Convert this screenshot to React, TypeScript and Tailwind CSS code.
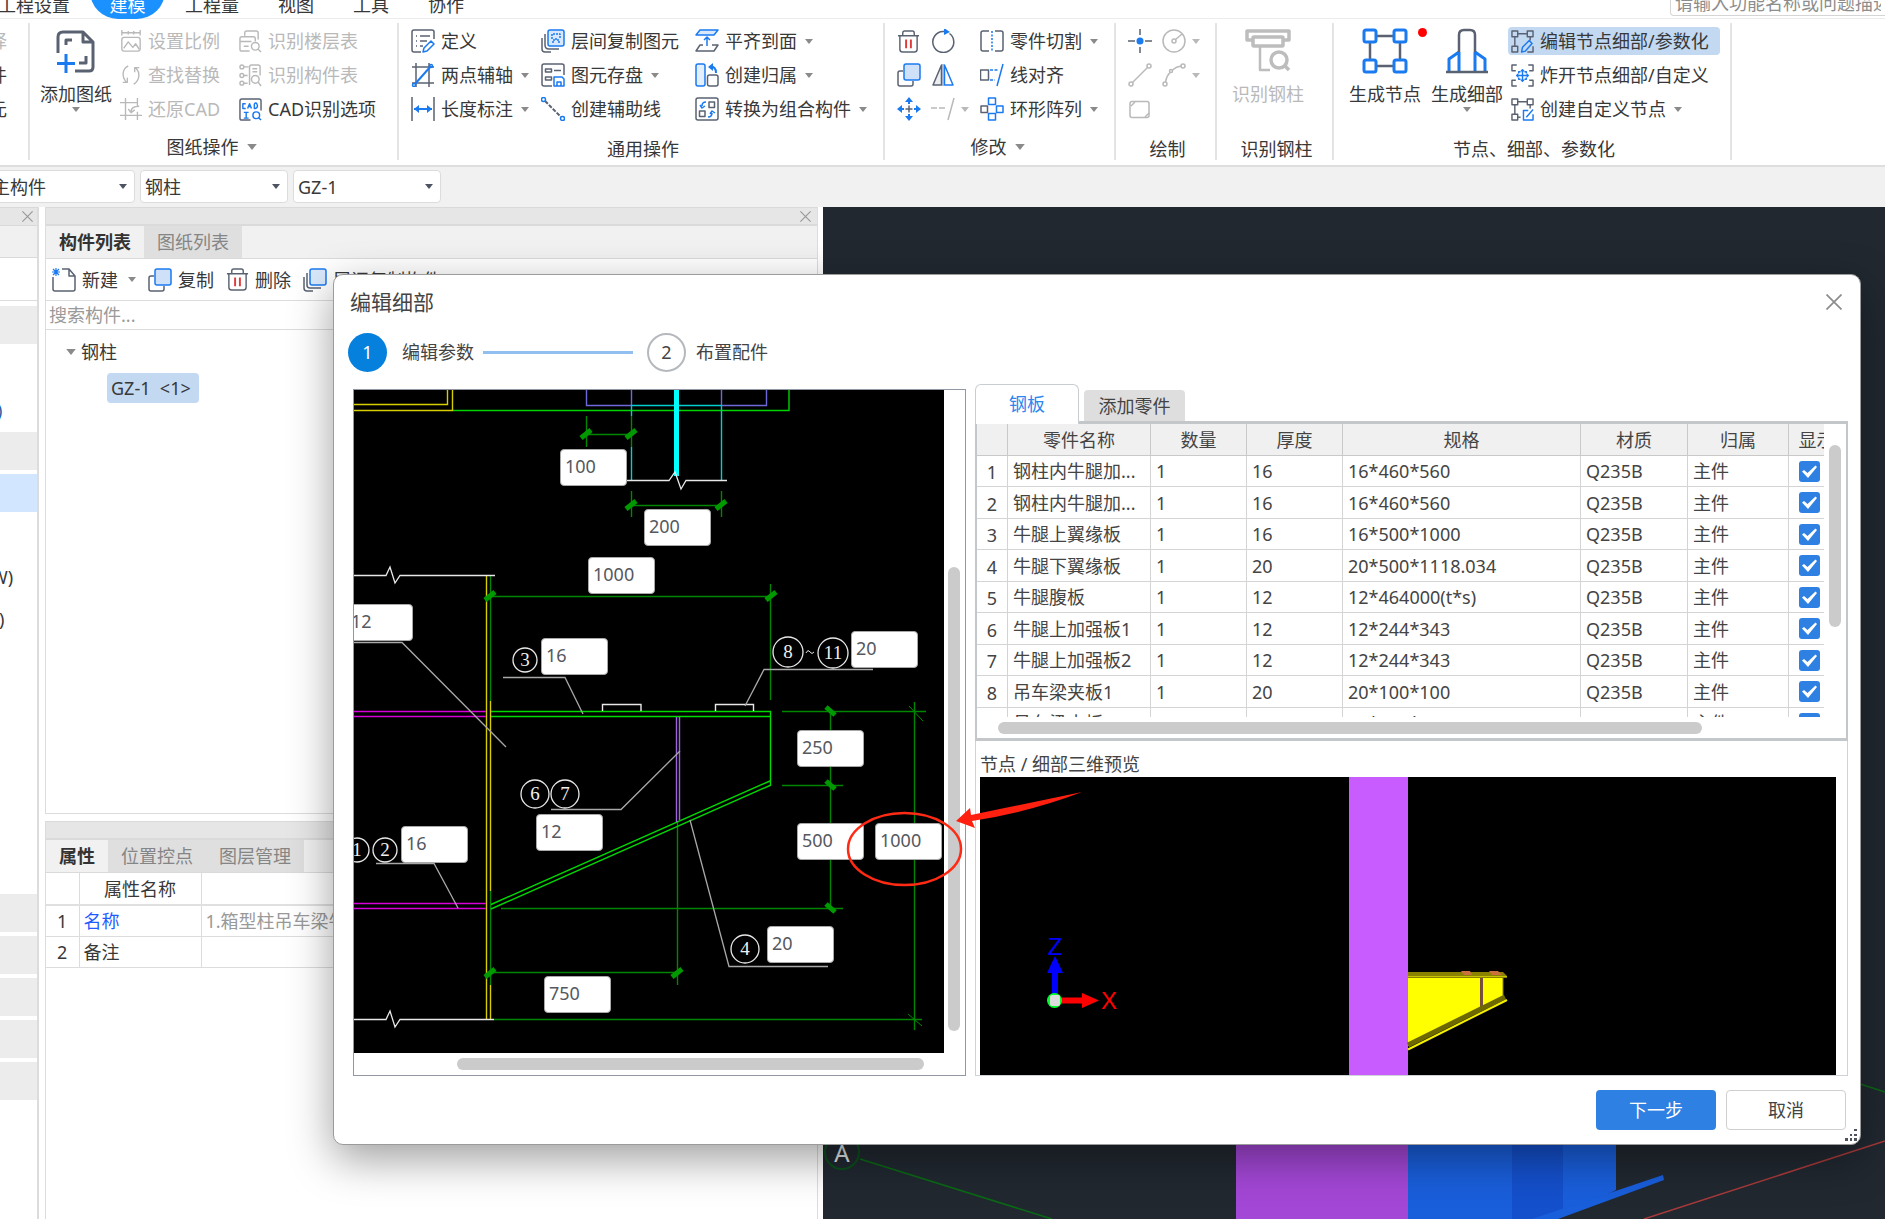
import React, { ReactNode } from "react";

const D = "#5a6272";
const B = "#1a7af0";
const G = "#b9b9b9";

function Ic({ s = 24, box = 24, c = D, w = 1.5, children }: { s?: number; box?: number; c?: string; w?: number; children: ReactNode }) {
  return (
    <svg width={s} height={s} viewBox={`0 0 ${box} ${box}`} fill="none" stroke={c} strokeWidth={w} strokeLinejoin="round" className="shrink-0" aria-hidden="true">
      {children}
    </svg>
  );
}

function Caret({ className = "text-[#8a8a8a]", big = false }: { className?: string; big?: boolean }) {
  return (
    <svg width={big ? 10 : 8} height={big ? 6 : 5} viewBox="0 0 8 5" className={`shrink-0 ${className}`} aria-hidden="true">
      <path d="M0 0h8L4 5z" fill="currentColor" />
    </svg>
  );
}

function Cross({ size = 11, className = "" }: { size?: number; className?: string }) {
  return (
    <svg width={size} height={size} viewBox="0 0 16 16" fill="none" stroke="currentColor" strokeWidth="1.7" className={className} aria-hidden="true">
      <path d="M0.5 0.5l15 15M15.5 0.5l-15 15" />
    </svg>
  );
}

/* ---------- ribbon icons ---------- */

const icons = {
  addSheet: (
    <Ic s={44} box={44} w={3}>
      <path d="M4 24V8q0-5 5-5h20l10 10v25q0 4-4 4H21M29 3v10h10" />
      <path d="M12 16v-5h6M32 27v7h-7" />
      <path d="M12 25v19M3 34.500h18" stroke={B} />
    </Ic>
  ),
  scale: (
    <Ic s={22} c={G}>
      <path d="M2 0v6M22 0v6M2 3h20M9 1v4M15 1v4" />
      <rect x="2" y="8" width="20" height="15" rx="2.500" />
      <path d="M4 20l5-7 5 6 3-4 4 6" />
    </Ic>
  ),
  findReplace: (
    <Ic s={22} c={G}>
      <path d="M9 2C3 5 1 13 7 20M3 20h5v-5M15 22c6-4 8-12 2-18M21 4h-5v5" />
    </Ic>
  ),
  restore: (
    <Ic s={22} c={G}>
      <path d="M6 0v19h18M0 5h19v5M0 19h6v5M19 0v5M19 15v9M21 9c-6 0-9 2-9 6M9 12l3 4 4-3" />
    </Ic>
  ),
  floorTable: (
    <Ic s={23} c={G}>
      <path d="M6 6V3q0-2 2-2h10q2 0 2 2v7M11 22H3q-2 0-2-2V9q0-2 2-2h12q2 0 2 2v3M1 12h12M5 17h5" />
      <circle cx="17" cy="17" r="4" />
      <path d="M20 20l3 3" />
    </Ic>
  ),
  partTable: (
    <Ic s={23} c={G}>
      <circle cx="3" cy="3" r="2" /><circle cx="3" cy="12" r="2" /><circle cx="3" cy="20" r="2" />
      <path d="M5 3h5M5 12h4M5 20h4M11 22V3q0-2 2-2h7q2 0 2 2v9M14 5h5M14 8h5" />
      <circle cx="17" cy="16" r="4" />
      <path d="M20 19l3 4" />
    </Ic>
  ),
  cadOptions: (
    <Ic s={23}>
      <path d="M12 23H3q-2 0-2-2V3q0-2 2-2h18q2 0 2 2v10" />
      <path d="M7 6H4v5h3M9 11l2-5 2 5M10 9h2M16 6v5h1q3-1 2-4t-3-1M5 15h5M7.500 15v6M5 21h5" stroke={B} />
      <circle cx="18" cy="18" r="3.500" stroke={B} />
      <path d="M20.500 20.500L23 23" stroke={B} />
    </Ic>
  ),
  define: (
    <Ic>
      <path d="M23 10V3q0-2-2-2H3Q1 1 1 3v18q0 2 2 2h7M5 7h1M9 7h10M5 12h1M9 12h7M5 17h1M9 17h3" />
      <path d="M12 23l1-4 7-7 3 3-7 7z" stroke={B} />
    </Ic>
  ),
  twoPoint: (
    <Ic>
      <path d="M5 0v24M18 0v24M1 4h22M1 20h22" />
      <path d="M4 21L20 3" stroke={B} strokeWidth="2" />
      <circle cx="20" cy="3" r="1.500" stroke={B} /><circle cx="3" cy="22" r="1.500" stroke={B} />
    </Ic>
  ),
  length: (
    <Ic>
      <path d="M1 0v24M23 0v24" />
      <path d="M3 12h18" stroke={B} strokeWidth="2" />
      <path d="M8 8l-5 4 5 4zM16 8l5 4-5 4z" fill={B} stroke="none" />
    </Ic>
  ),
  floorCopy: (
    <Ic>
      <path d="M4 5v11q0 4 4 4h10M1 9v11q0 3 3 3h6" />
      <rect x="7" y="1" width="16" height="16" rx="2" stroke={B} fill="#d9e9fb" />
      <path d="M11 10V5h8v5M11 13h2v-3h4v3h2" stroke={B} strokeDasharray="2 1" />
    </Ic>
  ),
  save: (
    <Ic>
      <path d="M11 23H3q-2 0-2-2V3q0-2 2-2h18q2 0 2 2v9" />
      <rect x="4.500" y="6" width="6" height="3" /><path d="M13 7.500h7" /><rect x="4.500" y="14" width="6" height="3" />
      <path d="M13 14h8l2 2v7H13zM16 23v-4h4v4" stroke={B} />
    </Ic>
  ),
  auxLine: (
    <Ic>
      <path d="M4 4l16 16" strokeDasharray="4 1.500" strokeWidth="2" />
      <circle cx="2.500" cy="2.500" r="2" stroke={B} /><circle cx="21.500" cy="21.500" r="2" stroke={B} />
    </Ic>
  ),
  alignFace: (
    <Ic>
      <path d="M5 1h18l-4 5H1z" stroke={B} fill="#d9e9fb" />
      <path d="M12 17V8M9 11l3-3 3 3" stroke={B} />
      <path d="M8 16H5l-4 6h18l4-6h-6" />
    </Ic>
  ),
  attribution: (
    <Ic>
      <rect x="1" y="1" width="9" height="22" rx="2" stroke={B} fill="#e3effc" />
      <rect x="12.500" y="12" width="10.500" height="11" rx="2" />
      <path d="M15 4q6-1 6 6" stroke={B} strokeWidth="2" /><path d="M18 0l-5 4 5 4z" fill={B} stroke="none" />
    </Ic>
  ),
  convert: (
    <Ic>
      <rect x="1" y="1" width="22" height="22" rx="2" />
      <rect x="14" y="5" width="5.500" height="5.500" /><rect x="4.500" y="14" width="5.500" height="5.500" />
      <path d="M11 5q-4 0-4 4M5 8l2 3 3-2M13 20q4 0 4-4M15 17l2-3 3 2" stroke={B} />
    </Ic>
  ),
  trash: (
    <Ic s={23}>
      <path d="M1 6h22M6 6V3q0-2 2-2h8q2 0 2 2v3M3 6v14q0 3 3 3h12q3 0 3-3V6" />
      <path d="M9.500 10v9M14.500 10v9" stroke="#e03a3a" strokeWidth="2" />
    </Ic>
  ),
  rotate: (
    <Ic>
      <path d="M18.500 4.500A10.500 10.500 0 1 1 12 2.500h2" /><path d="M13 -1l6 4-6 3z" fill={B} stroke="none" />
    </Ic>
  ),
  copy: (
    <Ic>
      <path d="M6 8H3q-2 0-2 2v11q0 2 2 2h11q2 0 2-2v-3" />
      <rect x="7" y="1" width="16" height="16" rx="2" stroke={B} fill="#cfe1f8" />
    </Ic>
  ),
  mirror: (
    <Ic>
      <path d="M10.500 2v20H2z" fill="#eceef1" /><path d="M13.500 2v20H22z" stroke={B} fill="#fff" /><path d="M12 1v22" stroke="#8fa6c4" />
    </Ic>
  ),
  move: (
    <Ic>
      <path d="M12 8.500v7M8.500 12h7" />
      <path d="M12 0l4 5h-3v2h-2V5H8zM12 24l4-5h-3v-2h-2v2H8zM0 12l5-4v3h2v2H5v3zM24 12l-5-4v3h-2v2h2v3z" fill={B} stroke="none" />
    </Ic>
  ),
  extend: (
    <Ic c={G}>
      <path d="M0 11h14" strokeDasharray="6 2" /><path d="M23 1l-6 22" />
    </Ic>
  ),
  cut: (
    <Ic>
      <path d="M9 2H3q-2 0-2 2v16q0 2 2 2h6M15 2h6q2 0 2 2v16q0 2-2 2h-6" />
      <path d="M12 2v20" stroke={B} strokeDasharray="2 1.500" />
    </Ic>
  ),
  lineAlign: (
    <Ic>
      <rect x="0.500" y="7" width="8" height="10" /><path d="M10 7h8M10 17h5" stroke={B} strokeDasharray="3 1.500" /><path d="M23 1l-6 22" stroke={B} />
    </Ic>
  ),
  ring: (
    <Ic>
      <rect x="8.500" y="1" width="7" height="6.500" stroke={B} /><rect x="8.500" y="16.500" width="7" height="6.500" stroke={B} /><rect x="16.500" y="9" width="6.500" height="6.500" stroke={B} /><rect x="1" y="9" width="6.500" height="6.500" />
    </Ic>
  ),
  point: (
    <Ic>
      <path d="M12 0v6M12 18v6M0 12h7M17 12h7" /><circle cx="12" cy="12" r="3.500" fill={B} stroke="none" />
    </Ic>
  ),
  circle: (
    <Ic c={G}>
      <circle cx="12" cy="12" r="11" /><circle cx="12" cy="12" r="2" /><path d="M13.500 10.500L20 5" />
    </Ic>
  ),
  line: (
    <Ic c={G}>
      <circle cx="21" cy="3" r="2" /><circle cx="3" cy="21" r="2" /><path d="M4.500 19.500l15-15" />
    </Ic>
  ),
  arc: (
    <Ic c={G}>
      <circle cx="21" cy="3" r="2" /><circle cx="3" cy="21" r="2" /><circle cx="9" cy="8" r="1.500" /><path d="M3.500 19q1-6 4.500-9.500M10.500 7q4-3.500 8.500-4" />
    </Ic>
  ),
  rect: (
    <Ic c={G}>
      <rect x="2" y="4.500" width="19" height="16" rx="2" /><path d="M3 9l4-4M17 20l4-4" />
    </Ic>
  ),
  steelColumn: (
    <Ic s={46} box={46} c="#bdbdbd" w={3.500}>
      <path d="M8 12H2V3h42v9h-6" /><rect x="8" y="9" width="30" height="9" rx="1" />
      <path d="M15 18v24h10" strokeWidth="2.500" /><circle cx="34" cy="32" r="8" /><path d="M40 38l4 4" />
    </Ic>
  ),
  node: (
    <Ic s={46} box={46} w={3}>
      <path d="M8 8h30v30H8z" strokeWidth="2.500" />
      <g stroke={B} fill="#fff">
        <rect x="2" y="2" width="12" height="12" rx="2" /><rect x="32" y="2" width="12" height="12" rx="2" />
        <rect x="2" y="32" width="12" height="12" rx="2" /><rect x="32" y="32" width="12" height="12" rx="2" />
      </g>
    </Ic>
  ),
  detail: (
    <Ic s={46} box={46} w={3}>
      <path d="M15 24l-10 7v12M31 24l10 7v12M15 24v20M31 24v20" stroke={B} />
      <path d="M15 24V7q0-5 5-5h6q5 0 5 5v17" strokeWidth="2.500" /><path d="M2 44h42" strokeWidth="2.500" />
    </Ic>
  ),
  editNode: (
    <Ic s={23}>
      <path d="M7 4h10M4 7v10M20 7v4" /><rect x="1" y="1" width="6" height="6" /><rect x="17" y="1" width="6" height="6" /><rect x="1" y="17" width="6" height="6" />
      <path d="M11 23l1-5 7-7 3 3-7 8z" stroke={B} /><path d="M17 23h6v-6" />
    </Ic>
  ),
  explode: (
    <Ic s={23}>
      <path d="M6 1H1v6h4M18 1h5v6h-4M6 23H1v-6h4M18 23h5v-6h-4" />
      <path d="M10 8H8v2M14 8h2v2M10 16H8v-2M14 16h2v-2M12 6v12M6 12h12M10.500 7.500L12 6l1.500 1.500M10.500 16.500L12 18l1.500-1.500M7.500 10.500L6 12l1.500 1.500M16.500 10.500L18 12l-1.500 1.500" stroke={B} />
    </Ic>
  ),
  customNode: (
    <Ic s={23}>
      <path d="M7 4h10M4 7v10M20 7v4M7 20h3" /><rect x="1" y="1" width="6" height="6" /><rect x="17" y="1" width="6" height="6" /><rect x="1" y="17" width="6" height="6" />
      <path d="M18 13h-5v10h10v-6M16 20l7-8" stroke={B} />
    </Ic>
  ),
  newFile: (
    <Ic>
      <path d="M1 9v12q0 2 2 2h18q2 0 2-2V8l-6-7h-7M17 1v7h6" />
      <path d="M0 4h8M4 0v8M1 1l6 6M7 1L1 7" stroke={B} strokeWidth="1.200" />
    </Ic>
  ),
  layers: (
    <Ic>
      <path d="M4 5v12q0 3 3 3h11M1 9v11q0 3 3 3h6" />
      <rect x="7" y="1" width="16" height="16" rx="2" stroke={B} fill="#d9e9fb" />
    </Ic>
  ),
};

/* ---------- ribbon ---------- */

function Tool({ icon, label, caret, off, on, className = "" }: { icon: ReactNode; label?: string; caret?: boolean; off?: boolean; on?: boolean; className?: string }) {
  return (
    <button
      type="button"
      disabled={off}
      aria-label={label ? undefined : "工具"}
      className={`flex h-[34px] shrink-0 items-center whitespace-nowrap ${off ? "text-[#b9b9b9]" : "text-[#383838]"} ${className}`}
    >
      <span className={`flex h-7 items-center gap-1.5 rounded ${on ? "-mx-[3px] bg-[#c3d9f2] pl-[3px] pr-[11px]" : ""}`}>
        {icon}
        {label}
      </span>
      {caret && <Caret className={`${label ? "ml-2" : "ml-1.5"} ${off ? "text-[#b9b9b9]" : "text-[#8a8a8a]"}`} />}
    </button>
  );
}

function BigTool({ icon, label, caret, off, dot }: { icon: ReactNode; label: string; caret?: boolean; off?: boolean; dot?: boolean }) {
  return (
    <button type="button" disabled={off} className={`relative flex w-[72px] shrink-0 flex-col items-center pt-1 ${off ? "text-[#b9b9b9]" : "text-[#383838]"}`}>
      <span className="flex h-[46px] items-center">{icon}</span>
      <span className="mt-2 whitespace-nowrap leading-6">{label}</span>
      {caret && <Caret className="mt-px text-[#8a8a8a]" />}
      {dot && <i className="absolute -right-1.5 top-1 size-[9px] rounded-full bg-[#ff0000]" />}
    </button>
  );
}

function Group({ label, more, className, children }: { label: string; more?: boolean; className: string; children: ReactNode }) {
  return (
    <section className={`flex shrink-0 flex-col border-r-2 border-[#e4e4e4] ${className}`}>
      <div className="flex h-[103px] pt-px">{children}</div>
      <h2 className={`mt-3 flex h-[22px] items-center justify-center gap-2 self-stretch ${more ? "pb-1 pr-1" : "pl-1"}`}>
        {label}
        {more && <Caret big />}
      </h2>
    </section>
  );
}

function Col({ className = "", children }: { className?: string; children: ReactNode }) {
  return <div className={`flex shrink-0 flex-col items-start ${className}`}>{children}</div>;
}

function Ribbon() {
  return (
    <header className="shrink-0 overflow-hidden bg-white text-[#383838]">
      <nav className="flex h-[19px] items-end justify-between border-b border-[#ececec]">
        <div className="-mb-px flex h-7 items-center whitespace-nowrap">
          <a href="#settings" className="-ml-0.5">工程设置</a>
          <a href="#model" className="ml-5 flex h-7 w-[75px] items-center justify-center rounded-b-full bg-[#1b90ff] text-white">建模</a>
          <a href="#quantity" className="ml-5">工程量</a>
          <a href="#view" className="ml-[39px]">视图</a>
          <a href="#tools" className="ml-[39px]">工具</a>
          <a href="#team" className="ml-[39px]">协作</a>
        </div>
        <input
          aria-label="搜索功能"
          placeholder="请输入功能名称或问题描述"
          className="mb-0.5 h-[30px] w-[215px] rounded-l border border-r-0 border-[#d5d5d5] px-1 pb-0 pt-1 placeholder:text-[#8d8d8d]"
        />
      </nav>
      <div className="flex h-[148px] border-b-2 border-[#dedede] pb-[5px] pt-1">
        <section className="flex w-[30px] shrink-0 flex-col border-r-2 border-[#e4e4e4] pt-px">
          {["选择", "构件", "图元"].map((t, i) => (
            <div key={t} className={`flex h-[34px] w-[7px] items-center justify-end overflow-hidden whitespace-nowrap ${i === 0 ? "text-[#b9b9b9]" : ""}`}>{t}</div>
          ))}
        </section>
        <Group label="图纸操作" more className="w-[369px]">
          <div className="flex pl-2.5">
            <BigTool icon={icons.addSheet} label="添加图纸" caret />
            <Col className="ml-2 w-[119px]">
              <Tool icon={icons.scale} label="设置比例" off />
              <Tool icon={icons.findReplace} label="查找替换" off />
              <Tool icon={icons.restore} label="还原CAD" off />
            </Col>
            <Col>
              <Tool icon={icons.floorTable} label="识别楼层表" off />
              <Tool icon={icons.partTable} label="识别构件表" off />
              <Tool icon={icons.cadOptions} label="CAD识别选项" />
            </Col>
          </div>
        </Group>
        <Group label="通用操作" className="w-[486px]">
          <div className="flex pl-3">
            <Col className="w-[130px]">
              <Tool icon={icons.define} label="定义" />
              <Tool icon={icons.twoPoint} label="两点辅轴" caret />
              <Tool icon={icons.length} label="长度标注" caret />
            </Col>
            <Col className="w-[154px]">
              <Tool icon={icons.floorCopy} label="层间复制图元" />
              <Tool icon={icons.save} label="图元存盘" caret />
              <Tool icon={icons.auxLine} label="创建辅助线" />
            </Col>
            <Col>
              <Tool icon={icons.alignFace} label="平齐到面" caret />
              <Tool icon={icons.attribution} label="创建归属" caret />
              <Tool icon={icons.convert} label="转换为组合构件" caret />
            </Col>
          </div>
        </Group>
        <Group label="修改" more className="w-[231px]">
          <div className="flex pl-3">
            <Col className="w-[34px]">
              <Tool icon={icons.trash} />
              <Tool icon={icons.copy} />
              <Tool icon={icons.move} />
            </Col>
            <Col className="w-[49px]">
              <Tool icon={icons.rotate} />
              <Tool icon={icons.mirror} />
              <Tool icon={icons.extend} caret off />
            </Col>
            <Col>
              <Tool icon={icons.cut} label="零件切割" caret />
              <Tool icon={icons.lineAlign} label="线对齐" />
              <Tool icon={icons.ring} label="环形阵列" caret />
            </Col>
          </div>
        </Group>
        <Group label="绘制" className="w-[101px]">
          <div className="flex pl-3">
            <Col className="w-[34px]">
              <Tool icon={icons.point} />
              <Tool icon={icons.line} off />
              <Tool icon={icons.rect} off />
            </Col>
            <Col>
              <Tool icon={icons.circle} caret off />
              <Tool icon={icons.arc} caret off />
            </Col>
          </div>
        </Group>
        <Group label="识别钢柱" className="w-[117px]">
          <div className="flex pl-[15px]">
            <BigTool icon={icons.steelColumn} label="识别钢柱" off />
          </div>
        </Group>
        <Group label="节点、细部、参数化" className="w-[398px]">
          <div className="flex pl-[15px]">
            <BigTool icon={icons.node} label="生成节点" dot />
            <span className="w-2.5" />
            <BigTool icon={icons.detail} label="生成细部" caret />
            <Col className="ml-2">
              <Tool icon={icons.editNode} label="编辑节点细部/参数化" on />
              <Tool icon={icons.explode} label="炸开节点细部/自定义" />
              <Tool icon={icons.customNode} label="创建自定义节点" caret />
            </Col>
          </div>
        </Group>
      </div>
    </header>
  );
}

function Combo({ label, value, className }: { label: string; value: string; className: string }) {
  return (
    <div className={`relative shrink-0 ${className}`}>
      <select aria-label={label} className="h-[33px] w-full appearance-none rounded border border-[#dcdcdc] bg-white pl-1 text-[#383838]">
        <option>{value}</option>
      </select>
      <Caret className="pointer-events-none absolute right-2 top-3.5 text-[#4d5361]" />
    </div>
  );
}

/* ---------- docked panels ---------- */

function SideStrip() {
  return (
    <aside className="flex w-[39px] shrink-0 flex-col overflow-hidden border-r-2 border-[#dcdcdc] bg-white text-[#383838]">
      <div className="flex h-[19px] items-center justify-end border-y border-[#d9d9d9] bg-[#e6e6e6] pr-1">
        <button type="button" aria-label="关闭"><Cross className="text-[#999]" /></button>
      </div>
      <div className="h-8 border-b border-[#d9d9d9] bg-[#f0f0f0]" />
      <div className="mt-[42px] h-1.5 border-t border-[#dcdcdc]" />
      <div className="h-[38px] bg-[#ececec]" />
      <div className="flex h-[88px] flex-col justify-end pb-2.5"><span className="-ml-[3px] text-[#2d5fa8]">)</span></div>
      <div className="h-[38px] bg-[#ececec]" />
      <div className="mt-1 h-[38px] bg-[#d3e6ff]" />
      <div className="flex h-[382px] flex-col pt-[52px] leading-[26px]">
        <span className="-ml-[9px]">W)</span>
        <span className="-ml-[1px] mt-4">)</span>
      </div>
      {[0, 1, 2, 3, 4].map((i) => (
        <div key={i} className="mb-1 h-[38px] shrink-0 bg-[#ececec]" />
      ))}
    </aside>
  );
}

function PanelBar({ closable }: { closable?: boolean }) {
  return (
    <div className="flex h-[19px] shrink-0 items-center justify-end border-b-2 border-t border-[#dadada] bg-[#e6e6e6] pr-1.5">
      {closable && <button type="button" aria-label="关闭面板"><Cross className="text-[#999]" /></button>}
    </div>
  );
}

function PanelTabs({ tabs }: { tabs: string[] }) {
  return (
    <div role="tablist" className="flex h-[33px] shrink-0 border-b border-[#dadada] bg-[#f1f1f1]">
      {tabs.map((t, i) => (
        <button key={t} type="button" role="tab" aria-selected={i === 0} className={i === 0 ? "px-[13px] font-bold text-[#333]" : "bg-[#dfdfdf] px-[13px] text-[#858585]"}>
          {t}
        </button>
      ))}
    </div>
  );
}

function SmallTool({ icon, label, caret }: { icon: ReactNode; label: string; caret?: boolean }) {
  return (
    <button type="button" className="flex shrink-0 items-center gap-1.5 whitespace-nowrap">
      {icon}
      {label}
      {caret && <Caret className="ml-1 text-[#8a8a8a]" />}
    </button>
  );
}

function DockPanels() {
  return (
    <div className="ml-1.5 flex w-[773px] shrink-0 flex-col text-[#383838]">
      <section className="flex h-[607px] shrink-0 flex-col border border-[#dcdcdc] border-t-0 bg-white">
        <PanelBar closable />
        <PanelTabs tabs={["构件列表", "图纸列表"]} />
        <div className="flex h-[42px] shrink-0 items-center gap-3 border-b border-[#dcdcdc] pl-1.5">
          <SmallTool icon={icons.newFile} label="新建" caret />
          <SmallTool icon={icons.copy} label="复制" />
          <SmallTool icon={icons.trash} label="删除" />
          <SmallTool icon={icons.layers} label="层间复制构件" />
        </div>
        <input aria-label="搜索构件" placeholder="搜索构件..." className="h-[29px] shrink-0 border-b border-[#dcdcdc] px-[3px] placeholder:text-[#9a9a9a]" />
        <ul className="pt-[7px] leading-[30px]">
          <li>
            <span className="flex items-center gap-[5px] pl-5"><Caret big /> 钢柱</span>
            <ul className="pl-[61px] pt-1.5">
              <li className="inline-block whitespace-pre rounded bg-[#c3d9f2] pl-1 pr-2">{"GZ-1  <1>"}</li>
            </ul>
          </li>
        </ul>
      </section>
      <section className="mt-[7px] flex flex-1 flex-col border-x border-[#dcdcdc] bg-white">
        <PanelBar />
        <PanelTabs tabs={["属性", "位置控点", "图层管理"]} />
        <table className="w-full table-fixed border-collapse">
          <thead>
            <tr className="h-[32px] border-b-2 border-[#e0e0e0]">
              <th className="w-[33px] border-r border-[#dcdcdc]" />
              <th className="w-[122px] border-r border-[#dcdcdc] font-normal">属性名称</th>
              <th className="font-normal" />
            </tr>
          </thead>
          <tbody>
            <tr className="h-[31px] border-b border-[#dcdcdc]">
              <td className="border-r border-[#dcdcdc] text-center">1</td>
              <td className="border-r border-[#dcdcdc] pl-1 text-[#1f5cff]">名称</td>
              <td className="pl-1 text-[#999]">1.箱型柱吊车梁牛腿</td>
            </tr>
            <tr className="h-[31px] border-b border-[#dcdcdc]">
              <td className="border-r border-[#dcdcdc] text-center">2</td>
              <td className="border-r border-[#dcdcdc] pl-1">备注</td>
              <td />
            </tr>
          </tbody>
        </table>
      </section>
    </div>
  );
}

function ModelCanvas() {
  return (
    <div className="relative ml-[5px] min-w-0 flex-1 overflow-hidden bg-[#212830]">
      <svg className="absolute inset-0 h-full w-full" viewBox="823 207 1062 1012" preserveAspectRatio="xMaxYMax slice" role="img" aria-label="三维模型">
        <path d="M860 1159L1052 1219M1848 1080L1885 1092" stroke="#0b6a14" strokeWidth="1.500" fill="none" />
        <path d="M1644 1219L1885 1141" stroke="#a83a3a" strokeWidth="1.500" fill="none" />
        <circle cx="842" cy="1152" r="17" fill="none" stroke="#0b4f1c" strokeWidth="2" />
        <text x="842" y="1162" textAnchor="middle" fontSize="24" fill="#e2e4e6">A</text>
        <rect x="1236" y="1000" width="173" height="219" fill="#a347d6" />
        <rect x="1408" y="1000" width="208" height="219" fill="#195edb" />
        <rect x="1512" y="1000" width="51" height="219" fill="#1450cc" />
        <path d="M1616 1190l-58 29h58z" fill="#212830" />
        <path d="M1532 1219L1663 1175l1 5-106 39z" fill="#195edb" />
      </svg>
    </div>
  );
}

/* ---------- parametric drawing ---------- */

const params: { x: number; y: number; v: string }[] = [
  { x: 560, y: 449, v: "100" },
  { x: 644, y: 509, v: "200" },
  { x: 588, y: 557, v: "1000" },
  { x: 346, y: 604, v: "12" },
  { x: 541, y: 638, v: "16" },
  { x: 851, y: 631, v: "20" },
  { x: 797, y: 730, v: "250" },
  { x: 797, y: 823, v: "500" },
  { x: 875, y: 823, v: "1000" },
  { x: 536, y: 814, v: "12" },
  { x: 401, y: 826, v: "16" },
  { x: 767, y: 926, v: "20" },
  { x: 544, y: 976, v: "750" },
];

const bubbles: { x: number; y: number; r: number; t: string }[] = [
  { x: 525, y: 660, r: 12, t: "3" },
  { x: 788, y: 652, r: 15, t: "8" },
  { x: 833, y: 653, r: 15, t: "11" },
  { x: 535, y: 794, r: 14, t: "6" },
  { x: 565, y: 794, r: 14, t: "7" },
  { x: 357, y: 850, r: 12, t: "1" },
  { x: 385, y: 850, r: 12, t: "2" },
  { x: 745, y: 949, r: 14, t: "4" },
];

const slashTicks = [[586, 434], [631, 434], [631, 505], [721, 505], [490, 596], [771, 596], [490, 973], [677, 973]];
const backTicks = [[831, 711], [831, 785], [831, 908]];

function Drawing() {
  return (
    <div className="relative min-w-0 flex-1 overflow-hidden bg-black">
      <svg className="absolute left-0 top-0" width="590" height="663" viewBox="354 390 590 663" fill="none" role="img" aria-label="牛腿参数图">
        <g strokeWidth="1.400">
          <path d="M354 404.500H447.500V390M354 410.500H452.500V390" stroke="#d6ce00" />
          <path d="M453 410.500H789V390" stroke="#00d400" />
          <path d="M586.500 390V405.500H631.500V390M721.500 390V405.500H766.500V390" stroke="#6d69da" />
          <path d="M631 405.500H721M631.500 405V416M631.500 447V480M721.500 405V480" stroke="#00cfd0" />
          <rect x="674" y="390" width="5" height="86" fill="#00ffff" />
          <path d="M586.500 416V447M631.500 416V447M586 434.500H631M631.500 491V517M721.500 491V517M631 505.500H721M490 596.500H771M770.500 584V700M490.500 576V701M490.500 891V985M782 711.500H926M830.500 711V908M914.500 702V1030M782 785.500H843M501 908.500H843M677.500 822V985M490 972.500H677M494 1019.500H922" stroke="#008600" />
          <path d="M486.500 576V1019M490.500 701V891M490.500 985V1019" stroke="#d6ce00" />
          <path d="M354 711.500H486M354 716.500H486M354 903.500H486M354 908.500H486" stroke="#d800d8" />
          <path d="M491 711.500H771M491 716.500H771M770.500 711V785M491 904.500L771 780.500M491 909L771 785" stroke="#00dc00" />
          <path d="M676.500 717V822M679.500 717V820" stroke="#9a66d8" />
          <path d="M602.500 711V704.500H641V711M715.500 711V704.500H753.500V711" stroke="#e8e8e8" />
        </g>
        <path d="M622 480.500H669L675 472L681 489L686 480.500H727M354 575.500H386L390 567L395 583L400 575.500H495M354 1019.500H386L390 1011L395 1027L400 1019.500H494" stroke="#e8e8e8" strokeWidth="1.300" />
        <path d="M354 642.500H402L506 747M503 677.500H565L583 714M873 669.500H764L745 706M551 809.500H621L680 751M376 863.500H434L458 908M690 820L729 966.500H828" stroke="#a8a8a8" strokeWidth="1.300" />
        <g stroke="#009a00" strokeWidth="5">
          {slashTicks.map(([x, y]) => <path key={`${x}-${y}`} d={`M${x - 5} ${y + 4}L${x + 5} ${y - 4}`} />)}
          {backTicks.map(([x, y]) => <path key={`${x}-${y}`} d={`M${x - 5} ${y - 4}L${x + 4} ${y + 4}`} />)}
        </g>
        <path d="M909 706L923 721M908 1014L922 1026" stroke="#008a00" />
        {bubbles.map((b) => (
          <g key={b.t}>
            <circle cx={b.x} cy={b.y} r={b.r} stroke="#e8e8e8" strokeWidth="1.300" />
            <text x={b.x} y={b.y + 6} textAnchor="middle" fontSize="19" fill="#f0f0f0" style={{ fontFamily: "Liberation Serif, serif" }}>{b.t}</text>
          </g>
        ))}
        <path d="M806 653q2-4 4-1t4 0" stroke="#e8e8e8" />
      </svg>
      {params.map((p) => (
        <input
          key={`${p.x}-${p.y}`}
          aria-label={`参数 ${p.v}`}
          defaultValue={p.v}
          className="absolute h-[37px] w-[67px] rounded border border-[#a8a8a8] bg-white px-1 pb-1 text-[#55585e]"
          style={{ left: p.x - 354, top: p.y - 390 }}
        />
      ))}
    </div>
  );
}

/* ---------- parts table ---------- */

const heads = ["", "零件名称", "数量", "厚度", "规格", "材质", "归属", "显示"];
const rows = [
  ["钢柱内牛腿加...", "16", "16*460*560"],
  ["钢柱内牛腿加...", "16", "16*460*560"],
  ["牛腿上翼缘板", "16", "16*500*1000"],
  ["牛腿下翼缘板", "20", "20*500*1118.034"],
  ["牛腿腹板", "12", "12*464000(t*s)"],
  ["牛腿上加强板1", "12", "12*244*343"],
  ["牛腿上加强板2", "12", "12*244*343"],
  ["吊车梁夹板1", "20", "20*100*100"],
  ["吊车梁夹板2", "20", "20*100*100"],
];

function PartsTable() {
  return (
    <div className="flex h-[320px] shrink-0 flex-col border-x-2 border-y-[3px] border-[#c4c7ca] bg-white">
      <div className="flex h-[293px]">
        <div className="min-w-0 flex-1 overflow-hidden">
          <table className="w-[868px] table-fixed border-separate border-spacing-0 whitespace-nowrap">
            <colgroup>
              <col className="w-[31px]" /><col className="w-[143px]" /><col className="w-[96px]" /><col className="w-[96px]" />
              <col className="w-[238px]" /><col className="w-[107px]" /><col className="w-[101px]" /><col className="w-[56px]" />
            </colgroup>
            <thead>
              <tr className="h-[32px] bg-[#f0f0f0]">
                {heads.map((h) => (
                  <th key={h} scope="col" className="border-b border-r border-[#c9c9c9] p-0 font-normal leading-6">{h}</th>
                ))}
              </tr>
            </thead>
            <tbody>
              {rows.map(([name, thick, spec], i) => (
                <tr key={i} className="odd:h-[31px] even:h-[32px] [&>td]:border-b [&>td]:border-r [&>td]:border-[#d4d4d4] [&>td]:pb-0 [&>td]:leading-6">
                  <td className="px-0 pt-0.5 text-center">{i + 1}</td>
                  <td className="px-[5px] pt-0">{name}</td>
                  <td className="px-[5px] pt-0">1</td>
                  <td className="px-[5px] pt-0">{thick}</td>
                  <td className="px-[5px] pt-0">{spec}</td>
                  <td className="px-[5px] pt-0">Q235B</td>
                  <td className="px-[5px] pt-0">主件</td>
                  <td className="pl-2.5 pr-0 pt-0">
                    <span className="relative block size-[21px]">
                      <input type="checkbox" defaultChecked aria-label={`显示 ${name} ${i + 1}`} className="block size-[21px] appearance-none rounded-[3px] bg-[#2e80e2]" />
                      <svg className="pointer-events-none absolute inset-0" width="21" height="21" viewBox="0 0 21 21" aria-hidden="true">
                        <path d="M3 10.500l2-1.500 3.500 3 8-7.500 1.500 1.500L9 17z" fill="#fff" />
                      </svg>
                    </span>
                  </td>
                </tr>
              ))}
            </tbody>
          </table>
        </div>
        <div className="w-[22px] shrink-0 pl-[5px] pt-[21px]">
          <div className="h-[182px] w-3 rounded-full bg-[#cbcbcb]" />
        </div>
      </div>
      <div className="flex h-[21px] items-center pl-[21px]">
        <div className="h-3 w-[704px] rounded-full bg-[#cbcbcb]" />
      </div>
    </div>
  );
}

function Preview() {
  return (
    <svg className="block h-0 min-h-0 w-full flex-1 bg-black" viewBox="980 777 856 298" preserveAspectRatio="xMidYMid slice" role="img" aria-label="三维预览">
      <rect x="1349" y="700" width="59" height="450" fill="#c95cff" />
      <path d="M1408 976H1503V997L1408 1046Z" fill="#ffff00" />
      <path d="M1408 972H1503L1507 976V978H1408Z" fill="#8a8200" />
      <path d="M1408 976.500H1507" stroke="#c9c400" />
      <path d="M1461 971h9l2 4h-8zM1489 971h9l4 4h-10z" fill="#c9703c" />
      <path d="M1481.500 978V1010" stroke="#77503c" strokeWidth="3" />
      <path d="M1408 1045L1505 997" stroke="#6e6800" strokeWidth="5" />
      <path d="M1408 1049.500L1507 1000" stroke="#f4f000" strokeWidth="2" />
      <path d="M1503 978V996" stroke="#8a8200" />
      <path d="M1055 998V970" stroke="#0000ff" strokeWidth="6" />
      <path d="M1047 973L1055 956L1063 973Z" fill="#0000ff" />
      <path d="M1058 1000.500H1084" stroke="#ff0000" strokeWidth="6" />
      <path d="M1082 993L1099 1000.500L1082 1008Z" fill="#ff0000" />
      <circle cx="1054.500" cy="1000.500" r="7.500" fill="#00ff2a" />
      <rect x="1050" y="995" width="10" height="11" rx="2" fill="#dcdcdc" />
      <text x="1055" y="955" textAnchor="middle" fontSize="24" fill="#0000ff" style={{ fontFamily: "Liberation Sans, sans-serif" }}>Z</text>
      <text x="1109" y="1009" textAnchor="middle" fontSize="24" fill="#ff0000" style={{ fontFamily: "Liberation Sans, sans-serif" }}>X</text>
    </svg>
  );
}

function Dialog() {
  return (
    <div role="dialog" aria-label="编辑细部" className="absolute bottom-[74px] left-[333px] right-6 top-[274px] flex flex-col rounded-[10px] border border-[#9b9b9b] bg-white text-[#444] shadow-[0_14px_44px_rgba(0,0,0,0.38)]">
      <div className="flex h-[54px] shrink-0 items-center justify-between pl-4 pr-[18px]">
        <h1 className="text-[21px]">编辑细部</h1>
        <button type="button" aria-label="关闭"><Cross size={16} className="text-[#8c8c8c]" /></button>
      </div>
      <ol className="mb-[9px] flex h-[46px] shrink-0 items-center pl-3.5">
        <li className="flex items-center">
          <span className="flex size-[39px] items-center justify-center rounded-full bg-[#0680dd] text-white">1</span>
          <span className="ml-[15px]">编辑参数</span>
        </li>
        <li className="flex items-center">
          <span className="ml-[9px] h-[3px] w-[150px] bg-[#91bff0]" />
          <span className="ml-3.5 flex size-[39px] items-center justify-center rounded-full border-2 border-[#b5b9bd]">2</span>
          <span className="ml-2.5">布置配件</span>
        </li>
      </ol>
      <div className="flex min-h-0 flex-1 gap-[9px] pl-[19px] pr-3">
        <div className="mt-[5px] flex w-[613px] shrink-0 flex-col border border-[#9198a4]">
          <div className="flex min-h-0 flex-1">
            <Drawing />
            <div className="w-[21px] shrink-0 pl-1 pt-[177px]">
              <div className="h-[464px] w-3 rounded-full bg-[#cbcbcb]" />
            </div>
          </div>
          <div className="flex h-[22px] shrink-0 items-center pl-[103px]">
            <div className="h-3 w-[467px] rounded-full bg-[#cbcbcb]" />
          </div>
        </div>
        <div className="flex min-w-0 flex-1 flex-col">
          <div role="tablist" className="flex h-[37px] shrink-0 items-end">
            <button type="button" role="tab" aria-selected="true" className="relative -mb-[3px] h-10 w-[104px] rounded-t-md border border-b-0 border-[#c8cdd2] bg-white pb-0.5 text-[#2b86ee]">钢板</button>
            <button type="button" role="tab" aria-selected="false" className="ml-[5px] h-[31px] w-[101px] rounded-t bg-[#dedede]">添加零件</button>
          </div>
          <PartsTable />
          <div className="flex min-h-0 flex-1 flex-col border border-t-0 border-[#cfd3d8] pl-1 pr-[11px]">
            <h3 className="mt-[11px] mb-px shrink-0 leading-6">节点 / 细部三维预览</h3>
            <Preview />
          </div>
        </div>
      </div>
      <div className="flex h-[68px] shrink-0 items-start justify-end gap-2.5 pr-3.5 pt-3.5">
        <button type="button" className="h-10 w-[120px] rounded bg-[#2e80e2] text-white">下一步</button>
        <button type="button" className="h-10 w-[120px] rounded border border-[#cfcfcf] bg-white">取消</button>
      </div>
      <svg className="absolute bottom-[3px] right-[3px]" width="12" height="12" viewBox="0 0 12 12" fill="#4e545e" aria-hidden="true">
        <path d="M9 0h3v2H9zM9 5h3v2H9zM9 9h3v3H9zM5 5h2v2H5zM5 9h2v3H5zM0 9h3v3H0z" />
      </svg>
      <svg className="pointer-events-none absolute left-[511px] top-[510px]" width="245" height="105" viewBox="845 785 245 105" fill="none" aria-hidden="true">
        <ellipse cx="904.500" cy="849" rx="56.500" ry="36" stroke="#ff2a14" strokeWidth="2.500" />
        <path d="M956 821L970 808L971 815Q1020 805 1082 792Q1030 812 972 821L975 828Z" fill="#ff2010" />
      </svg>
    </div>
  );
}

export default function App() {
  return (
    <div className="relative flex h-screen min-h-[1000px] flex-col overflow-hidden bg-[#f1f1f1] text-[18px] leading-6 [font-family:'Noto_Sans','Noto_Sans_CJK_SC',sans-serif]">
      <Ribbon />
      <div className="-ml-[13px] flex h-10 shrink-0 gap-[5px] pt-[3px]">
        <Combo label="构件分类" value="主构件" className="w-[148px]" />
        <Combo label="构件类型" value="钢柱" className="w-[148px]" />
        <Combo label="构件" value="GZ-1" className="w-[148px]" />
      </div>
      <main className="flex min-h-0 flex-1 bg-white">
        <SideStrip />
        <DockPanels />
        <ModelCanvas />
      </main>
      <Dialog />
    </div>
  );
}
